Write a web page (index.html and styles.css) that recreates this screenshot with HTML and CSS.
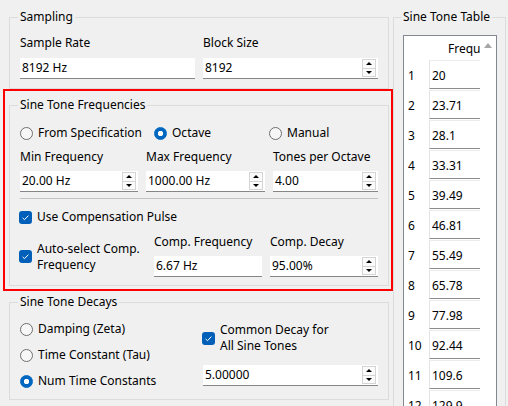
FILE: index.html
```html
<!DOCTYPE html>
<html>
<head>
<meta charset="utf-8">
<link rel="stylesheet" href="styles.css">
</head>
<body>
<div class="window">
  <div class="left">
    <fieldset class="group sampling">
      <legend>Sampling</legend>
      <div class="cols2">
        <div class="field">
          <div class="lbl">Sample Rate</div>
          <div class="input"><span class="val">8192 Hz</span></div>
        </div>
        <div class="field">
          <div class="lbl">Block Size</div>
          <div class="input"><span class="val">8192</span><span class="spin"><span class="up"></span><span class="down"></span></span></div>
        </div>
      </div>
    </fieldset>

    <div class="highlight">
      <fieldset class="group freq">
        <legend>Sine Tone Frequencies</legend>
        <div class="radios">
          <div class="opt"><span class="radio"></span><span>From Specification</span></div>
          <div class="opt"><span class="radio on"></span><span>Octave</span></div>
          <div class="opt"><span class="radio"></span><span>Manual</span></div>
        </div>
        <div class="cols3">
          <div class="field">
            <div class="lbl">Min Frequency</div>
            <div class="input"><span class="val">20.00 Hz</span><span class="spin"><span class="up"></span><span class="down"></span></span></div>
          </div>
          <div class="field">
            <div class="lbl">Max Frequency</div>
            <div class="input"><span class="val">1000.00 Hz</span><span class="spin"><span class="up"></span><span class="down"></span></span></div>
          </div>
          <div class="field">
            <div class="lbl">Tones per Octave</div>
            <div class="input"><span class="val">4.00</span><span class="spin"><span class="up"></span><span class="down"></span></span></div>
          </div>
        </div>
        <div class="sep"></div>
        <div class="opt check-row"><span class="check"><svg width="13" height="13" viewBox="0 0 13 13"><rect width="13" height="13" rx="3" fill="#005fb8"/><path d="M3.6 6.9 L5.5 8.7 L9.4 4.6" fill="none" stroke="#fff" stroke-width="1"/></svg></span><span>Use Compensation Pulse</span></div>
        <div class="comp">
          <div class="opt multi"><span class="check"><svg width="13" height="13" viewBox="0 0 13 13"><rect width="13" height="13" rx="3" fill="#005fb8"/><path d="M3.6 6.9 L5.5 8.7 L9.4 4.6" fill="none" stroke="#fff" stroke-width="1"/></svg></span><span>Auto-select Comp.<br>Frequency</span></div>
          <div class="field">
            <div class="lbl">Comp. Frequency</div>
            <div class="input"><span class="val">6.67 Hz</span></div>
          </div>
          <div class="field">
            <div class="lbl">Comp. Decay</div>
            <div class="input"><span class="val">95.00%</span><span class="spin"><span class="up"></span><span class="down"></span></span></div>
          </div>
        </div>
      </fieldset>
    </div>

    <fieldset class="group decays">
      <legend>Sine Tone Decays</legend>
      <div class="cols2">
        <div class="radio-list">
          <div class="opt"><span class="radio"></span><span>Damping (Zeta)</span></div>
          <div class="opt"><span class="radio"></span><span>Time Constant (Tau)</span></div>
          <div class="opt"><span class="radio on"></span><span>Num Time Constants</span></div>
        </div>
        <div class="common">
          <div class="opt multi"><span class="check"><svg width="13" height="13" viewBox="0 0 13 13"><rect width="13" height="13" rx="3" fill="#005fb8"/><path d="M3.6 6.9 L5.5 8.7 L9.4 4.6" fill="none" stroke="#fff" stroke-width="1"/></svg></span><span>Common Decay for<br>All Sine Tones</span></div>
          <div class="input"><span class="val">5.00000</span><span class="spin"><span class="up"></span><span class="down"></span></span></div>
        </div>
      </div>
    </fieldset>
  </div>

  <fieldset class="group table-group">
    <legend>Sine Tone Table</legend>
    <div class="table">
      <div class="tbody">
        <div class="thead"><div class="corner"></div><div class="colhead">Frequency (Hz)</div></div>
        <div class="trow"><div class="rownum">1</div><div class="cell">20</div></div>
        <div class="trow"><div class="rownum">2</div><div class="cell">23.71</div></div>
        <div class="trow"><div class="rownum">3</div><div class="cell">28.1</div></div>
        <div class="trow"><div class="rownum">4</div><div class="cell">33.31</div></div>
        <div class="trow"><div class="rownum">5</div><div class="cell">39.49</div></div>
        <div class="trow"><div class="rownum">6</div><div class="cell">46.81</div></div>
        <div class="trow"><div class="rownum">7</div><div class="cell">55.49</div></div>
        <div class="trow"><div class="rownum">8</div><div class="cell">65.78</div></div>
        <div class="trow"><div class="rownum">9</div><div class="cell">77.98</div></div>
        <div class="trow"><div class="rownum">10</div><div class="cell">92.44</div></div>
        <div class="trow"><div class="rownum">11</div><div class="cell">109.6</div></div>
        <div class="trow"><div class="rownum">12</div><div class="cell">129.9</div></div>
        <div class="trow"><div class="rownum">13</div><div class="cell">154.0</div></div>
      </div>
      <div class="scrollbar"><span class="sb-up"></span></div>
    </div>
  </fieldset>
</div>
</body>
</html>
```

FILE: styles.css
```css
* { box-sizing: border-box; }
html, body {
  margin: 0;
  height: 100%;
  overflow: hidden;
  background: #f0f0f0;
}
body {
  font-family: "Noto Sans", "Open Sans", sans-serif;
  font-size: 12px;
  line-height: 16px;
  color: #000;
}
.window {
  display: grid;
  grid-template-columns: 380px 113px;
  column-gap: 4px;
  padding: 9px 0 0 9px;
  align-items: start;
}
.left {
  display: flex;
  flex-direction: column;
  gap: 8px;
}
.group {
  margin: 0;
  min-width: 0;
  border: 1px solid #dcdcdc;
  padding: 0 10px 8px;
}
.group > legend {
  margin-left: -2px;
  padding: 0 2px;
  line-height: 16px;
}
.sampling { padding-bottom: 9px; }
.sampling .cols2 { margin-top: 10px; }
.sampling .field { gap: 7px; }

.cols2 {
  display: grid;
  grid-template-columns: 1fr 1fr;
  column-gap: 8px;
}
.field {
  display: flex;
  flex-direction: column;
  gap: 6px;
}
.lbl { white-space: nowrap; }
.input {
  height: 21px;
  background: #fff;
  border-bottom: 1px solid #868686;
  display: flex;
  align-items: center;
  padding-left: 2px;
}
.val { flex: 1; white-space: nowrap; }
.spin {
  width: 14px;
  height: 18px;
  margin-right: 2px;
  display: flex;
  flex-direction: column;
}
.spin span {
  flex: 1;
  border: 1px solid #d4d4d4;
  background: #fbfbfb;
  display: flex;
  align-items: center;
  justify-content: center;
}
.spin .down { border-top: none; }
.spin .up::after,
.spin .down::after {
  content: "";
  border-left: 3px solid transparent;
  border-right: 3px solid transparent;
}
.spin .up::after { border-bottom: 3px solid #000; }
.spin .down::after { border-top: 3px solid #000; }

.highlight { position: relative; }
.highlight::after {
  content: "";
  position: absolute;
  top: -8px;
  left: -6px;
  right: -4px;
  bottom: -5px;
  border: 2px solid #ff0000;
  pointer-events: none;
}

.opt {
  display: flex;
  align-items: center;
  gap: 5px;
  white-space: nowrap;
}
.radio {
  flex: none;
  width: 13px;
  height: 13px;
  border-radius: 50%;
  border: 1px solid #6f6f6f;
  background: #f7f7f7;
}
.radio.on {
  border-color: #0067c0;
  background: radial-gradient(circle, #fff 0 2.4px, #0067c0 3px);
}
.check { flex: none; width: 13px; height: 13px; display: block; }
.check svg { display: block; }

.radios {
  display: grid;
  grid-template-columns: 134px 115px 1fr;
  margin-top: 12px;
}
.cols3 {
  display: grid;
  grid-template-columns: 118px 119px 1fr;
  column-gap: 8px;
  margin-top: 8px;
}
.sep {
  margin-top: 6px;
  border-top: 1px solid #c3c3c3;
}
.check-row { margin-top: 10px; margin-left: -1px; }
.comp {
  display: grid;
  grid-template-columns: 126px 108px 1fr;
  column-gap: 8px;
  margin-top: 9px;
}
.multi { line-height: 15.5px; }
.comp .multi { align-self: center; margin-left: -1px; margin-top: 2px; }

.decays { padding-bottom: 10px; }
.decays .cols2 { margin-top: 11px; align-items: start; }
.radio-list {
  display: flex;
  flex-direction: column;
  gap: 10px;
}
.common {
  margin-top: 1px;
  display: flex;
  flex-direction: column;
  gap: 11px;
}
.common .multi { line-height: 16px; margin-left: -1px; }

.table-group { padding: 0 8px 0 9px; }
.table {
  margin-top: 10px;
  height: 380px;
  border: 1px solid #828790;
  background: #fff;
  display: flex;
}
.tbody { flex: 1; overflow: hidden; }
.thead, .trow {
  display: grid;
  grid-template-columns: 25px 51px;
}
.thead { height: 24px; }
.colhead {
  padding: 5px 0 0 19px;
  white-space: nowrap;
  overflow: hidden;
}
.trow { margin-bottom: 1px; }
.rownum { padding: 8px 0 0 4px; }
.cell {
  height: 29px;
  padding: 7px 0 0 2px;
  border-top: 1px solid #ececec;
  border-left: 1px solid #e4e4e4;
  border-bottom: 1px solid #8c8c8c;
}
.scrollbar {
  width: 16px;
  display: flex;
  justify-content: center;
}
.sb-up {
  margin-top: 7px;
  width: 0;
  height: 0;
  border-left: 4px solid transparent;
  border-right: 4px solid transparent;
  border-bottom: 5px solid #a6a6a6;
}
```
